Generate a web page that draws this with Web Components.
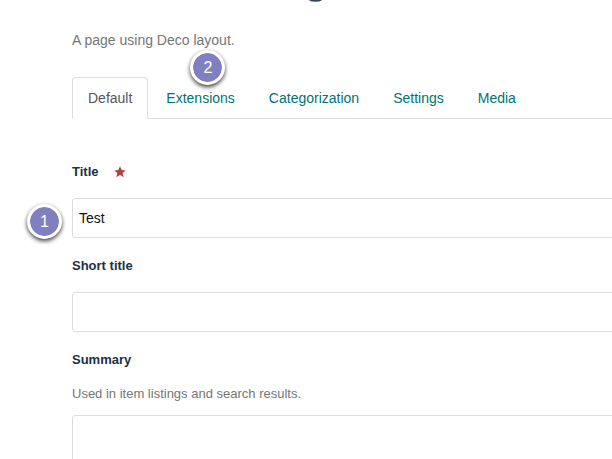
<!DOCTYPE html>
<html lang="en">
<head>
<meta charset="utf-8">
<title>Deco page</title>
<style>
body { margin: 0; background: #fff; font-family: "Liberation Sans", Arial, sans-serif; font-size: 14px; line-height: 20px; color: #757575; overflow: hidden; }
</style>
</head>
<body>
<deco-page>
  <heading-edge slot="heading"></heading-edge>
  <span slot="intro">A page using Deco layout.</span>
  <tab-bar slot="tabs"></tab-bar>
  <form-field label="Title" value="Test" required step="1"></form-field>
  <form-field label="Short title"></form-field>
  <form-field label="Summary" help="Used in item listings and search results." multiline></form-field>
</deco-page>
<script>
class HeadingEdge extends HTMLElement {
  connectedCallback() {
    this.attachShadow({ mode: 'open' }).innerHTML = `
      <style>
        :host { display: block; height: 30px; padding-left: 234px; }
        svg { display: block; }
      </style>
      <svg width="18" height="4" aria-hidden="true"><path d="M2 -2C5 1.8 14 1.8 17 -2" fill="none" stroke="#34455c" stroke-width="2"/></svg>`;
  }
}

class StepBadge extends HTMLElement {
  connectedCallback() {
    this.attachShadow({ mode: 'open' }).innerHTML = `
      <style>
        :host { display: block; box-sizing: border-box; width: 35px; height: 35px; border: 3px solid #fff; border-radius: 50%;
          background: #807fc0; background-clip: padding-box; color: #fff; font-size: 16px; line-height: 29px; text-align: center;
          box-shadow: 0 2px 4px rgba(0,0,0,.75); }
      </style>
      <slot></slot>`;
  }
}

class TabBar extends HTMLElement {
  connectedCallback() {
    this.attachShadow({ mode: 'open' }).innerHTML = `
      <style>
        :host { display: block; }
        nav { display: flex; gap: 2px; border-bottom: 1px solid #ddd; }
        a { position: relative; padding: 10px 15px; border: 1px solid transparent; border-radius: 4px 4px 0 0; color: #007374;
          text-decoration: none; margin-bottom: -1px; }
        a[aria-current] { color: #555; background: #fff; border-color: #ddd #ddd #fff; }
        step-badge { position: absolute; left: 39px; top: -28px; }
      </style>
      <nav>
        <a href="#default" aria-current="page">Default</a>
        <a href="#extensions">Extensions<step-badge>2</step-badge></a>
        <a href="#categorization">Categorization</a>
        <a href="#settings">Settings</a>
        <a href="#media">Media</a>
      </nav>`;
  }
}

class FormField extends HTMLElement {
  connectedCallback() {
    const a = n => this.getAttribute(n) || '';
    const help = a('help') ? `<p id="help">${a('help')}</p>` : '';
    const star = this.hasAttribute('required')
      ? `<svg width="12" height="12" viewBox="0 0 12 12" aria-hidden="true"><path d="M6 .2 7.6 4.1 11.7 4.4 8.6 7 9.6 11.2 6 9 2.4 11.2 3.4 7 .3 4.4 4.4 4.1Z" fill="#ad4240"/></svg>` : '';
    const control = this.hasAttribute('multiline')
      ? '<textarea id="control" aria-describedby="help"></textarea>'
      : `<input id="control" type="text" value="${a('value')}">`;
    this.attachShadow({ mode: 'open' }).innerHTML = `
      <style>
        :host { display: block; }
        label { display: flex; align-items: center; gap: 15px; font-size: 13px; font-weight: bold; color: #203048; }
        p { margin: 14px 0 -5px; font-size: 13px; }
        .box { position: relative; margin-top: 16px; }
        input, textarea { display: block; box-sizing: border-box; width: 100%; height: 40px; margin: 0; padding: 6px; border: 1px solid #ddd;
          border-radius: 3px; background: #fff; color: #111; font: inherit; resize: none; outline: 0; }
        textarea { height: 60px; }
        step-badge { position: absolute; left: -45px; top: 6px; }
      </style>
      <label for="control">${a('label')}${star}</label>${help}
      <div class="box">${control}${a('step') ? `<step-badge>${a('step')}</step-badge>` : ''}</div>`;
  }
}

class DecoPage extends HTMLElement {
  connectedCallback() {
    this.attachShadow({ mode: 'open' }).innerHTML = `
      <style>
        :host { display: block; margin-right: -8px; padding-left: 72px; }
        p { margin: 0 0 27px; }
        form { display: flex; flex-direction: column; gap: 18px; margin-top: 43px; }
      </style>
      <slot name="heading"></slot>
      <p><slot name="intro"></slot></p>
      <slot name="tabs"></slot>
      <form><slot></slot></form>`;
  }
}

customElements.define('heading-edge', HeadingEdge);
customElements.define('step-badge', StepBadge);
customElements.define('tab-bar', TabBar);
customElements.define('form-field', FormField);
customElements.define('deco-page', DecoPage);
</script>
</body>
</html>
